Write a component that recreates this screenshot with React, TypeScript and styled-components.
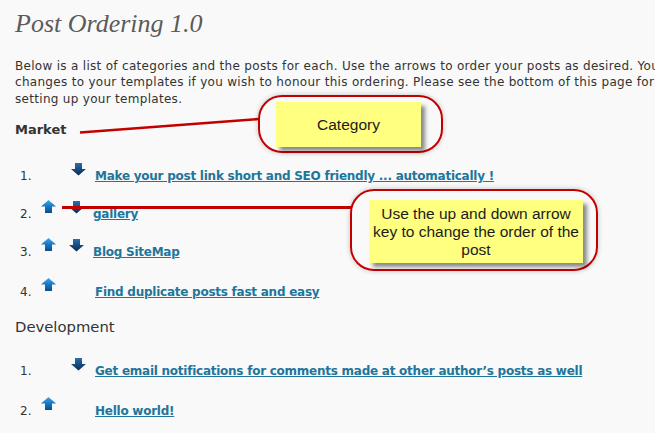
import React from "react";
import styled, { createGlobalStyle } from "styled-components";

const Global = createGlobalStyle`
  html, body {
    margin: 0;
    padding: 0;
    background: #f9f9f9;
    overflow: hidden;
  }
`;

const Page = styled.div`
  position: relative;
  width: 655px;
  height: 433px;
  overflow: hidden;
  box-sizing: border-box;
  padding: 9px 0 0 15px;
  background: #f9f9f9;
  font-family: "DejaVu Sans", Verdana, sans-serif;
  color: #333;
`;

const Title = styled.h2`
  margin: 0;
  font-family: "Liberation Serif", "Times New Roman", serif;
  font-style: italic;
  font-weight: normal;
  font-size: 26px;
  line-height: 30px;
  color: #5b5b5b;
`;

const Intro = styled.p`
  margin: 19px 0 0;
  font-size: 12px;
  letter-spacing: 0.3px;
  line-height: 16.3px;
  white-space: nowrap;
`;

const CatHeading = styled.h3<{ $bold?: boolean; $size: number; $top: number }>`
  margin: ${(p) => p.$top}px 0 0;
  font-size: ${(p) => p.$size}px;
  font-weight: ${(p) => (p.$bold ? 700 : 400)};
  line-height: ${(p) => (p.$bold ? 16 : 17)}px;
  color: #333;
`;

const PostList = styled.ol<{ $top: number }>`
  list-style: none;
  margin: ${(p) => p.$top}px 0 0;
  padding: 0;
`;

const Row = styled.li<{ $h: number }>`
  display: flex;
  align-items: flex-start;
  height: ${(p) => p.$h}px;
`;

const Num = styled.span`
  margin: 6.5px 0 0 5px;
  width: 21px;
  font-size: 12px;
  line-height: 16px;
  color: #333;
`;

const Slot = styled.span<{ $gap?: number; $down?: boolean }>`
  display: block;
  width: 15px;
  height: 13px;
  margin-left: ${(p) => p.$gap ?? 0}px;
  margin-top: ${(p) => (p.$down ? 1 : 0)}px;
  svg {
    display: block;
  }
`;

const PostLink = styled.a`
  margin: 6.5px 0 0 9px;
  font-size: 12px;
  letter-spacing: -0.25px;
  line-height: 16px;
  font-weight: 700;
  color: #21759b;
  text-decoration: underline;
  white-space: nowrap;
  cursor: pointer;
`;

const Marks = styled.svg`
  position: absolute;
  left: 0;
  top: 0;
  pointer-events: none;
`;

const Callout = styled.div<{ $x: number; $y: number; $w: number; $h: number; $dx: number; $dy: number }>`
  position: absolute;
  left: ${(p) => p.$x}px;
  top: ${(p) => p.$y}px;
  width: ${(p) => p.$w}px;
  height: ${(p) => p.$h}px;
  box-sizing: border-box;
  padding: ${(p) => p.$dy - 2}px 0 0 ${(p) => p.$dx - 2}px;
  border: 2px solid #c20000;
  border-radius: 24px;
  box-shadow: 0 0 4px 1px rgba(0, 0, 0, 0.16);
`;

const Note = styled.div<{ $w: number; $h: number }>`
  width: ${(p) => p.$w}px;
  height: ${(p) => p.$h}px;
  display: flex;
  align-items: center;
  justify-content: center;
  text-align: center;
  background: #ffff80;
  box-shadow: 4px 4px 4px rgba(0, 0, 0, 0.45);
  font-family: "Liberation Sans", Arial, sans-serif;
  font-size: 15.5px;
  line-height: 18px;
  color: #1c1c1c;
`;

const UpArrow = () => (
  <svg width="15" height="13" viewBox="0 0 15 13">
    <defs>
      <linearGradient id="upg" x1="0" y1="0" x2="0" y2="1">
        <stop offset="0" stopColor="#45a6ea" />
        <stop offset="0.5" stopColor="#1877c4" />
        <stop offset="1" stopColor="#0a4c8a" />
      </linearGradient>
    </defs>
    <path d="M7.5 0 L15 6.5 H11 V13 H4 V6.5 H0 Z" fill="url(#upg)" />
  </svg>
);

const DownArrow = () => (
  <svg width="15" height="13" viewBox="0 0 15 13">
    <defs>
      <linearGradient id="dng" x1="0" y1="0" x2="0" y2="1">
        <stop offset="0" stopColor="#2c6ea8" />
        <stop offset="0.5" stopColor="#174d80" />
        <stop offset="1" stopColor="#0a2a52" />
      </linearGradient>
    </defs>
    <path d="M4 0 H11 V6 H15 L7.5 12.5 L0 6 H4 Z" fill="url(#dng)" />
  </svg>
);

type Post = { title: string; up: boolean; down: boolean; h: number };

const market: Post[] = [
  { title: "Make your post link short and SEO friendly ... automatically !", up: false, down: true, h: 38 },
  { title: "gallery", up: true, down: true, h: 38 },
  { title: "Blog SiteMap", up: true, down: true, h: 40 },
  { title: "Find duplicate posts fast and easy", up: true, down: false, h: 38 },
];

const development: Post[] = [
  { title: "Get email notifications for comments made at other author\u2019s posts as well", up: false, down: true, h: 40 },
  { title: "Hello world!", up: true, down: false, h: 40 },
];

const PostRow = ({ post, index }: { post: Post; index: number }) => {
  const both = post.up && post.down;
  return (
    <Row $h={post.h}>
      <Num>{index + 1}.</Num>
      <Slot>{post.up && <UpArrow />}</Slot>
      <Slot $down $gap={both ? 13 : 15}>
        {post.down && <DownArrow />}
      </Slot>
      <PostLink>{post.title}</PostLink>
    </Row>
  );
};

export default function App() {
  return (
    <>
      <Global />
      <Page>
        <Title>Post Ordering 1.0</Title>
        <Intro>
          Below is a list of categories and the posts for each. Use the arrows to order your posts as desired. You will need to make
          <br />
          changes to your templates if you wish to honour this ordering. Please see the bottom of this page for instructions on
          <br />
          setting up your templates.
        </Intro>
        <CatHeading $bold $size={13} $top={15}>
          Market
        </CatHeading>
        <PostList $top={24}>
          {market.map((p, i) => (
            <PostRow key={p.title} post={p} index={i} />
          ))}
        </PostList>
        <CatHeading $size={14.8} $top={2}>
          Development
        </CatHeading>
        <PostList $top={22}>
          {development.map((p, i) => (
            <PostRow key={p.title} post={p} index={i} />
          ))}
        </PostList>

        <Marks width="655" height="433" viewBox="0 0 655 433">
          <line x1="80" y1="132.5" x2="259" y2="119" stroke="#c20000" strokeWidth="2.5" />
          <line x1="62" y1="207.5" x2="352" y2="207.5" stroke="#c20000" strokeWidth="3" />
        </Marks>

        <Callout $x={258} $y={95} $w={185} $h={58} $dx={18} $dy={7}>
          <Note $w={145} $h={45}>Category</Note>
        </Callout>
        <Callout $x={350} $y={189} $w={248} $h={82} $dx={19} $dy={11}>
          <Note $w={214} $h={63}>
            Use the up and down arrow
            <br />
            key to change the order of the
            <br />
            post
          </Note>
        </Callout>
      </Page>
    </>
  );
}
